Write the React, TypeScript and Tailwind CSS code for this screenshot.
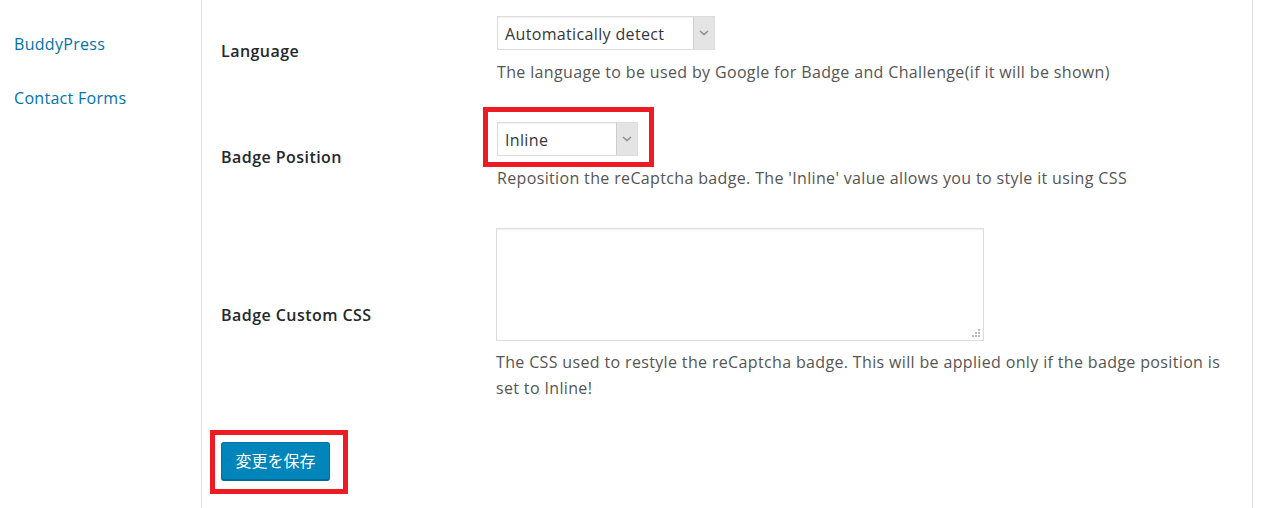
import React from "react";

const font = { fontFamily: '"Open Sans", "Noto Sans CJK JP", sans-serif' };

function Chevron() {
  return (
    <svg width="10" height="6" viewBox="0 0 10 6" fill="none">
      <path d="M1 1 L5 4.5 L9 1" stroke="#8a8a8a" strokeWidth="1.4" />
    </svg>
  );
}

function Select({ value, width }: { value: string; width: string }) {
  return (
    <div className={`flex h-[34px] ${width} border border-[#ddd] bg-white shadow-[inset_0_1px_2px_rgba(0,0,0,0.07)]`}>
      <div className="flex flex-1 items-center pt-[2px] pl-[7px] text-[16px] tracking-[0.35px] text-[#32373c]">{value}</div>
      <div className="flex w-[21px] items-center justify-center border-l border-[#ccc] bg-[#e4e4e4]">
        <Chevron />
      </div>
    </div>
  );
}

function Resize() {
  return (
    <svg width="8" height="8" viewBox="0 0 8 8" className="absolute bottom-[3px] right-[3px]">
      <rect x="6" y="0" width="2" height="2" fill="#bbb" />
      <rect x="3" y="3" width="2" height="2" fill="#bbb" />
      <rect x="6" y="3" width="2" height="2" fill="#bbb" />
      <rect x="0" y="6" width="2" height="2" fill="#bbb" />
      <rect x="3" y="6" width="2" height="2" fill="#bbb" />
      <rect x="6" y="6" width="2" height="2" fill="#bbb" />
    </svg>
  );
}

export default function App() {
  return (
    <div className="flex h-[508px] w-[1270px] overflow-hidden bg-white" style={font}>
      <aside className="w-[202px] shrink-0 border-r border-[#e1e1e1] pl-[14px] pt-[31px]">
        <div className="flex flex-col gap-[28px] text-[16px] leading-[26px] tracking-[0.3px] text-[#0073aa]">
          <a>BuddyPress</a>
          <a>Contact Forms</a>
        </div>
      </aside>
      <main className="w-[1051px] shrink-0 border-r border-[#e1e1e1] pl-[19px] pt-[16px]">
        <div className="flex flex-col gap-[37px]">
          <div className="flex items-center">
            <div className="w-[276px] text-[16px] font-semibold tracking-[0.45px] text-[#23282d]">Language</div>
            <div className="flex flex-col gap-[9px]">
              <Select value="Automatically detect" width="w-[218px]" />
              <p className="text-[16px] leading-[26px] tracking-[0.35px] text-[#555]">
                The language to be used by Google for Badge and Challenge(if it will be shown)
              </p>
            </div>
          </div>
          <div className="flex items-center">
            <div className="w-[276px] text-[16px] font-semibold tracking-[0.45px] text-[#23282d]">Badge Position</div>
            <div className="flex flex-col gap-[9px]">
              <div className="relative w-[141px]">
                <Select value="Inline" width="w-[141px]" />
                <div className="absolute -left-[14px] -top-[15px] h-[60px] w-[171px] border-[5px] border-[#ed1c24]" />
              </div>
              <p className="text-[16px] leading-[26px] tracking-[0.35px] text-[#555]">
                Reposition the reCaptcha badge. The 'Inline' value allows you to style it using CSS
              </p>
            </div>
          </div>
          <div className="flex items-center">
            <div className="w-[275px] text-[16px] font-semibold tracking-[0.45px] text-[#23282d]">Badge Custom CSS</div>
            <div className="flex flex-col gap-[8px]">
              <div className="relative h-[113px] w-[488px] border border-[#ddd] bg-white shadow-[inset_0_1px_2px_rgba(0,0,0,0.07)]">
                <Resize />
              </div>
              <p className="w-[730px] text-[16px] leading-[26px] tracking-[0.35px] text-[#555]">
                The CSS used to restyle the reCaptcha badge. This will be applied only if the badge position is set to Inline!
              </p>
            </div>
          </div>
          <div className="flex pt-[4px]">
            <div className="relative">
              <button className="flex h-[38px] w-[109px] items-center justify-center rounded-[3px] border border-[#0073aa] border-b-[#006799] bg-[#0085ba] text-[16px] text-white shadow-[0_1px_0_#006799]">
                変更を保存
              </button>
              <div className="absolute -left-[11px] -top-[12px] h-[64px] w-[138px] border-[5px] border-[#ed1c24]" />
            </div>
          </div>
        </div>
      </main>
      <div className="flex-1" />
    </div>
  );
}
